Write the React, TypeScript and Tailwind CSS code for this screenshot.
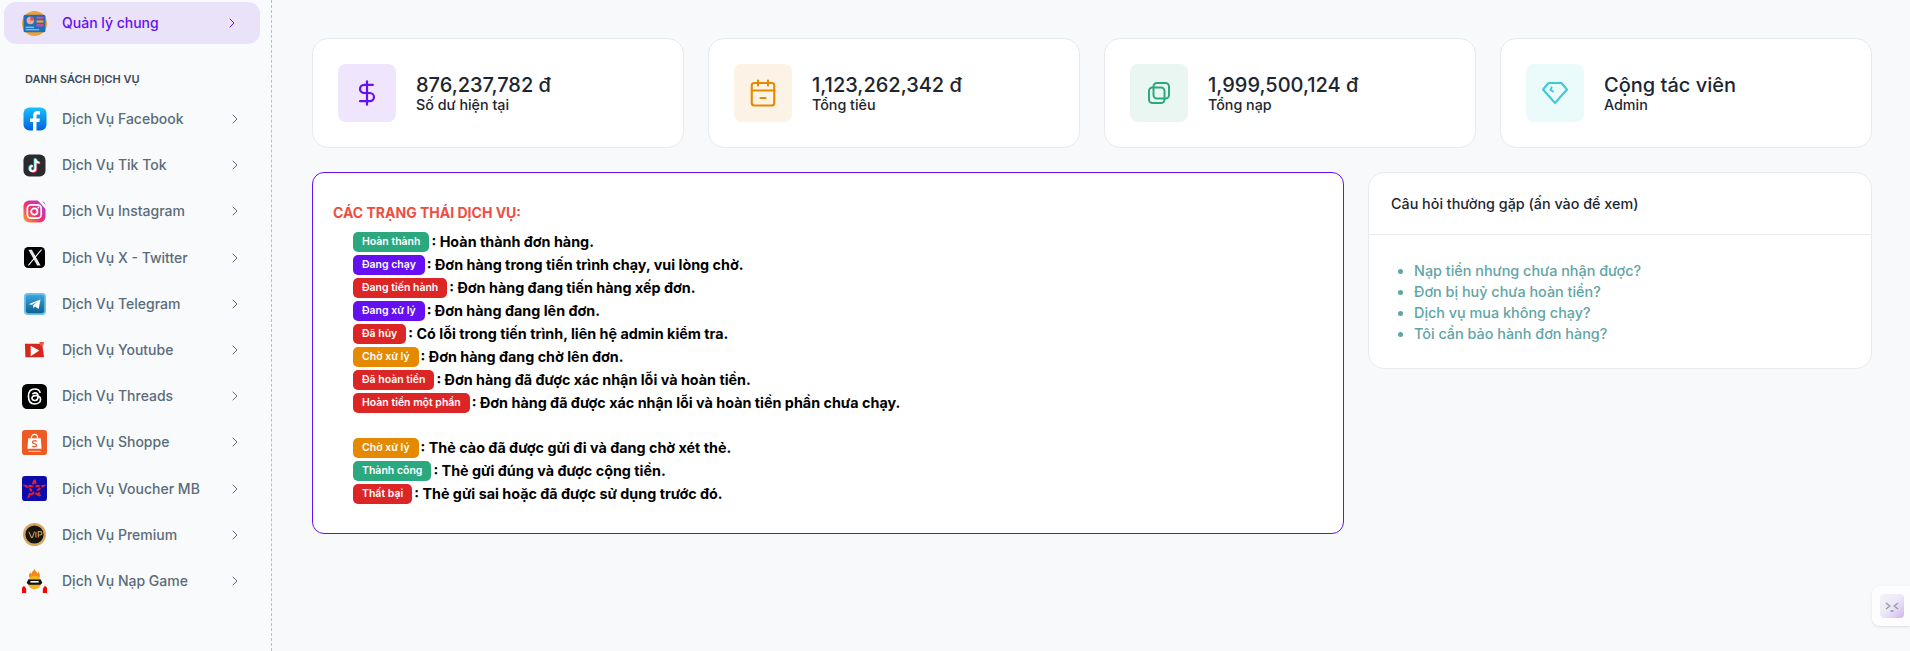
import { ChevronRight, DollarSign, CalendarMinus2 } from 'lucide-react'
import type { ReactNode } from 'react'

const Tile = ({ children, className }: { children: ReactNode; className: string }) => (
  <svg viewBox="0 0 24 24" className={className}>{children}</svg>
)

const icons: Record<string, ReactNode> = {
  overview: (
    <Tile className="w-[25px] h-[25px]">
      <circle cx="12" cy="12" r="12" fill="#f0a030" />
      <rect x="1.5" y="3.5" width="21" height="17" rx="1.5" fill="#1f6fb8" />
      <circle cx="8" cy="9" r="3.6" fill="#f6a6a0" />
      <path d="M8 9V5.4A3.6 3.6 0 0 1 11.6 9z" fill="#e8503a" />
      <rect x="14" y="5.5" width="6.5" height="2" fill="#e0479e" />
      <rect x="14" y="9" width="6.5" height="2.2" fill="#f0a030" />
      <rect x="14" y="12.6" width="6.5" height="2.2" fill="#e0479e" />
      <rect x="3.5" y="15" width="8" height="1.4" fill="#7cc4ee" />
      <rect x="3.5" y="17.4" width="13" height="1.2" fill="#7cc4ee" />
    </Tile>
  ),
  facebook: (
    <Tile className="w-[24px] h-[24px]">
      <defs>
        <linearGradient id="fb" x1="0" y1="0" x2="0" y2="1">
          <stop offset="0" stopColor="#18c0ff" />
          <stop offset="1" stopColor="#0062e0" />
        </linearGradient>
      </defs>
      <rect x="0.5" y="0.5" width="23" height="23" rx="6" fill="url(#fb)" />
      <path d="M10 24v-9H7v-3.6h3V8.6C10 5.7 11.8 4 14.400 4c1.200 0 2.200.1 2.600.2v3.200h-1.800c-1.400 0-1.700.7-1.700 1.700v2.300h3.400l-.5 3.600h-2.900v9z" fill="#fff" />
    </Tile>
  ),
  tiktok: (
    <Tile className="w-[23px] h-[23px]">
      <rect x="0.500" y="0.500" width="23" height="23" rx="6" fill="#2b2b2f" />
      <path d="M13 5v10.200a2.800 2.800 0 1 1-2.800-2.800M13 5c.3 2.400 1.800 3.900 4.200 4.100" fill="none" stroke="#25f4ee" strokeWidth="2.200" transform="translate(-.7 -.4)" />
      <path d="M13 5v10.200a2.800 2.800 0 1 1-2.800-2.800M13 5c.3 2.400 1.800 3.900 4.200 4.100" fill="none" stroke="#fe2c55" strokeWidth="2.200" transform="translate(.7 .4)" />
      <path d="M13 5v10.200a2.800 2.800 0 1 1-2.800-2.800M13 5c.3 2.400 1.800 3.900 4.200 4.100" fill="none" stroke="#fff" strokeWidth="2" />
    </Tile>
  ),
  instagram: (
    <Tile className="w-[23px] h-[23px]">
      <defs>
        <linearGradient id="ig" x1="0" y1="1" x2="1" y2="0">
          <stop offset="0" stopColor="#f9a825" />
          <stop offset="0.45" stopColor="#f0306e" />
          <stop offset="1" stopColor="#a03ee0" />
        </linearGradient>
      </defs>
      <rect x="0.500" y="0.500" width="23" height="23" rx="6" fill="url(#ig)" />
      <path d="M15 0h4l5 6v4z" fill="#fff" />
      <rect x="4.500" y="5" width="14.500" height="14" rx="4" fill="none" stroke="#fff" strokeWidth="1.800" />
      <circle cx="11.800" cy="12" r="3.300" fill="none" stroke="#fff" strokeWidth="1.800" />
      <circle cx="16" cy="7.800" r="1" fill="#fff" />
    </Tile>
  ),
  twitter: (
    <Tile className="w-[21px] h-[21px]">
      <rect width="24" height="24" rx="5" fill="#000" />
      <path d="M5 3h4l10 18h-4z" fill="#e8e8e8" />
      <path d="M20 3 5 21" stroke="#fff" strokeWidth="1.200" />
    </Tile>
  ),
  telegram: (
    <Tile className="w-[22px] h-[22px]">
      <defs>
        <linearGradient id="tg" x1="0" y1="0" x2="0" y2="1">
          <stop offset="0" stopColor="#3aa5dd" />
          <stop offset="1" stopColor="#12618f" />
        </linearGradient>
      </defs>
      <rect width="24" height="24" rx="4" fill="#6fc1ea" />
      <rect x="2" y="2" width="20" height="20" rx="3" fill="url(#tg)" />
      <path d="M5 12.200 18 7l-2 10.500-3.800-2.800-1.900 1.900-.4-3.200 5-4.400-6.200 3.800z" fill="#fff" />
    </Tile>
  ),
  youtube: (
    <Tile className="w-[23px] h-[23px]">
      <path d="M2 5h18l2 14H2.500z" fill="#d9261c" />
      <path d="M17 3h5l-1 4h-3z" fill="#e85a3a" />
      <path d="M8 7l9 5-9 6z" fill="#fff" />
    </Tile>
  ),
  threads: (
    <Tile className="w-[25px] h-[25px]">
      <rect width="24" height="24" rx="5" fill="#000" />
      <path d="M17.500 8.500C16.800 6 14.800 4.800 12.200 4.800 8.400 4.800 6.200 7.500 6.200 12s2.200 7.200 6 7.200c3.300 0 5.600-1.900 5.600-4.400 0-2.500-2.200-3.900-5-3.700-2 .1-3.300 1.200-3.200 2.600.1 1.300 1.300 2.200 2.900 2.100 2-.1 3-1.500 2.900-4.300-.1-2-1.200-3-2.800-3-1.100 0-2 .4-2.600 1.300" fill="none" stroke="#fff" strokeWidth="1.600" />
    </Tile>
  ),
  shopee: (
    <Tile className="w-[25px] h-[25px]">
      <rect width="24" height="24" rx="3" fill="#ee5a24" />
      <path d="M6 8h12l.8 10H5.200z" fill="#fff" />
      <path d="M9 8c0-5 6-5 6 0" fill="none" stroke="#fff" strokeWidth="1.200" />
      <path d="M14 11c-1-1-4-1-4 .7s4 1.200 4 3-3.200 1.700-4.200.5" fill="none" stroke="#ee5a24" strokeWidth="1.200" />
      <rect x="6" y="20" width="12" height="1" fill="#f9c6ae" />
    </Tile>
  ),
  voucher: (
    <Tile className="w-[25px] h-[25px]">
      <rect width="24" height="24" rx="3" fill="#0c0caa" />
      <path d="M12 3.500l2 6.200 6.500-.2-5.300 3.800 2.100 6.200-5.300-3.900-5.300 3.900 2.100-6.200-5.300-3.800 6.500.2z" fill="none" stroke="#e0202c" strokeWidth="2" strokeDasharray="4 1.500" />
    </Tile>
  ),
  premium: (
    <Tile className="w-[23px] h-[23px]">
      <circle cx="12" cy="12" r="12" fill="#d7a65a" />
      <circle cx="12" cy="12" r="9.500" fill="#17130f" />
      <path d="M6 9l2.800 6h1l2.200-6M13.500 9v6M16 15V9h2a1.500 1.500 0 0 1 0 3.500h-2" fill="none" stroke="#c79a50" strokeWidth="1.200" />
    </Tile>
  ),
  game: (
    <Tile className="w-[25px] h-[25px]">
      <path d="M12 1c.5 2 2 2 2.500 4 .8-.5 1-1.200 1-2 1.500 2 2 4 1.500 6H7c-.7-2-.2-3.500 1-5 .2.800.6 1.200 1.200 1.500C9.500 3.500 11 3 12 1z" fill="#f28a1e" />
      <circle cx="12" cy="14" r="6.500" fill="#f7b21c" />
      <path d="M6 11h12l1.500 3.500-2 1.500H6.500l-2-1.500z" fill="#111" />
      <rect x="8" y="12.500" width="8" height="1.500" fill="#fff" />
      <path d="M0 24v-5l2-2 2 3v4zM24 24v-5l-2-2-2 3v4z" fill="#f00" />
    </Tile>
  ),
}

const services = [
  { name: 'Dịch Vụ Facebook', icon: 'facebook' },
  { name: 'Dịch Vụ Tik Tok', icon: 'tiktok' },
  { name: 'Dịch Vụ Instagram', icon: 'instagram' },
  { name: 'Dịch Vụ X - Twitter', icon: 'twitter' },
  { name: 'Dịch Vụ Telegram', icon: 'telegram' },
  { name: 'Dịch Vụ Youtube', icon: 'youtube' },
  { name: 'Dịch Vụ Threads', icon: 'threads' },
  { name: 'Dịch Vụ Shoppe', icon: 'shopee' },
  { name: 'Dịch Vụ Voucher MB', icon: 'voucher' },
  { name: 'Dịch Vụ Premium', icon: 'premium' },
  { name: 'Dịch Vụ Nạp Game', icon: 'game' },
]

const GREEN = 'bg-[#2ca87f]'
const PURPLE = 'bg-[#6610f2]'
const RED = 'bg-[#dc2626]'
const ORANGE = 'bg-[#e58a00]'

const orderStatuses = [
  { label: 'Hoàn thành', color: GREEN, text: 'Hoàn thành đơn hàng.' },
  { label: 'Đang chạy', color: PURPLE, text: 'Đơn hàng trong tiến trình chạy, vui lòng chờ.' },
  { label: 'Đang tiến hành', color: RED, text: 'Đơn hàng đang tiến hàng xếp đơn.' },
  { label: 'Đang xử lý', color: PURPLE, text: 'Đơn hàng đang lên đơn.' },
  { label: 'Đã hủy', color: RED, text: 'Có lỗi trong tiến trình, liên hệ admin kiểm tra.' },
  { label: 'Chờ xử lý', color: ORANGE, text: 'Đơn hàng đang chờ lên đơn.' },
  { label: 'Đã hoàn tiền', color: RED, text: 'Đơn hàng đã được xác nhận lỗi và hoàn tiền.' },
  { label: 'Hoàn tiền một phần', color: RED, text: 'Đơn hàng đã được xác nhận lỗi và hoàn tiền phần chưa chạy.' },
]

const cardStatuses = [
  { label: 'Chờ xử lý', color: ORANGE, text: 'Thẻ cào đã được gửi đi và đang chờ xét thẻ.' },
  { label: 'Thành công', color: GREEN, text: 'Thẻ gửi đúng và được cộng tiền.' },
  { label: 'Thất bại', color: RED, text: 'Thẻ gửi sai hoặc đã được sử dụng trước đó.' },
]

const faqs = [
  'Nạp tiền nhưng chưa nhận được?',
  'Đơn bị huỷ chưa hoàn tiền?',
  'Dịch vụ mua không chạy?',
  'Tôi cần bảo hành đơn hàng?',
]

const GemIcon = () => (
  <svg viewBox="0 0 26 26" className="w-[26px] h-[26px] text-[#3ec9d6]" fill="none" stroke="currentColor" strokeWidth="2" strokeLinejoin="round" strokeLinecap="round">
    <path d="M6.500 3h13L25 9.500 13 23 1 9.500z" />
    <path d="M9.500 7.500 8.500 10l2.500 1.500" />
  </svg>
)

const CopiesIcon = () => (
  <svg viewBox="0 0 24 24" className="w-6 h-6 text-[#2ca87f]" fill="none" stroke="currentColor" strokeWidth="2">
    <rect x="6.500" y="2" width="15.500" height="15.500" rx="3.500" />
    <rect x="2" y="6.500" width="15.500" height="15.500" rx="3.500" />
  </svg>
)

const stats = [
  { icon: <DollarSign className="w-7 h-7 text-[#6610f2]" strokeWidth={1.9} />, tile: 'bg-[#efe6fd]', value: '876,237,782 đ', label: 'Số dư hiện tại' },
  { icon: <CalendarMinus2 className="w-[30px] h-[30px] text-[#e58a00]" strokeWidth={1.7} />, tile: 'bg-[#fcf3e6]', value: '1,123,262,342 đ', label: 'Tổng tiêu' },
  { icon: <CopiesIcon />, tile: 'bg-[#eaf6f2]', value: '1,999,500,124 đ', label: 'Tổng nạp' },
  { icon: <GemIcon />, tile: 'bg-[#ebfafb]', value: 'Cộng tác viên', label: 'Admin' },
]

const StatusRow = ({ label, color, text }: { label: string; color: string; text: string }) => (
  <div className="flex items-center h-[23px] gap-[2px]">
    <span className={`${color} text-white text-[10.5px] font-semibold h-5 leading-5 px-[9px] rounded-[5px]`}>{label}</span>
    <span className="text-[14.35px] font-bold text-black whitespace-nowrap">: {text}</span>
  </div>
)

export default function App() {
  return (
    <div className="flex h-[651px] overflow-hidden bg-[#f8f9fa] font-['Inter',sans-serif]">
      {/* Sidebar */}
      <aside className="w-[272px] shrink-0 bg-[#f8fafc] border-r border-dashed border-[#b8bec6] pt-[2px]">
        <div className="flex items-center h-[42px] ml-1 w-[256px] pl-[18px] pr-[20px] rounded-xl bg-[#eae2f9] text-[#6610f2]">
          <span className="w-[40px] flex">{icons.overview}</span>
          <span className="text-sm font-medium flex-1">Quản lý chung</span>
          <ChevronRight className="w-4 h-4" strokeWidth={1.5} />
        </div>
        <div className="pl-[25px] mt-[28px] mb-[10px] text-[11px] leading-[14px] font-semibold uppercase text-[#3e4853]">Danh sách dịch vụ</div>
        {services.map((s) => (
          <div key={s.name} className="flex items-center h-[46.2px] pl-[22px] pr-[28px] text-[#5b6b79]">
            <span className="w-[25px] mr-[15px] flex items-center justify-center">{icons[s.icon]}</span>
            <span className="text-sm font-medium flex-1">{s.name}</span>
            <ChevronRight className="w-4 h-4" strokeWidth={1.5} />
          </div>
        ))}
      </aside>

      {/* Main */}
      <main className="flex-1 pt-[38px] pl-10 pr-[38px]">
        <div className="grid grid-cols-4 gap-6">
          {stats.map((s) => (
            <div key={s.value} className="flex items-center gap-5 h-[110px] px-[25px] bg-white border border-[#e7eaee] rounded-2xl">
              <div className={`${s.tile} w-[58px] h-[58px] rounded-lg flex items-center justify-center`}>{s.icon}</div>
              <div>
                <div className="text-xl leading-6 font-medium text-[#1d2630]">{s.value}</div>
                <div className="text-[14.3px] leading-4 font-medium text-[#1d2630]">{s.label}</div>
              </div>
            </div>
          ))}
        </div>

        <div className="flex items-start gap-6 mt-6">
          <section className="flex-1 h-[362px] bg-white border border-[#6610f2] rounded-xl px-5 pt-[30px]">
            <h2 className="text-sm leading-5 font-bold text-[#ef4d42] uppercase mb-[7px]">Các trạng thái dịch vụ:</h2>
            <div className="pl-5">
              {orderStatuses.map((s) => <StatusRow key={s.label} {...s} />)}
              <div className="h-[22px]" />
              {cardStatuses.map((s) => <StatusRow key={s.label} {...s} />)}
            </div>
          </section>

          <section className="w-[504px] h-[197px] bg-white border border-[#e7eaee] rounded-2xl">
            <div className="h-[62px] flex items-center px-[22px] border-b border-[#e7eaee] text-[14.35px] font-medium text-[#1d2630]">
              Câu hỏi thường gặp (ấn vào để xem)
            </div>
            <ul className="list-disc pl-[45px] pt-[25px] text-[14.4px] leading-[21px] font-medium text-[#5fa5a5]">
              {faqs.map((q) => <li key={q}>{q}</li>)}
            </ul>
          </section>
        </div>
      </main>

      {/* Floating customizer button */}
      <div className="fixed right-0 top-[586px] w-[38px] h-10 bg-white/70 rounded-l-lg shadow-sm flex items-center pl-2">
        <div className="w-6 h-6 rounded bg-gradient-to-br from-[#f4f3f9] via-[#ece8f6] to-[#d0b5ef] flex items-center justify-center">
          <svg viewBox="0 0 24 24" className="w-[18px] h-[18px]" fill="none" stroke="#9a9ca3" strokeWidth="2">
            <path d="M4 8l5 4-5 4M20 8l-5 4 5 4M10 18q2 2 4 0" />
          </svg>
        </div>
      </div>
    </div>
  )
}
